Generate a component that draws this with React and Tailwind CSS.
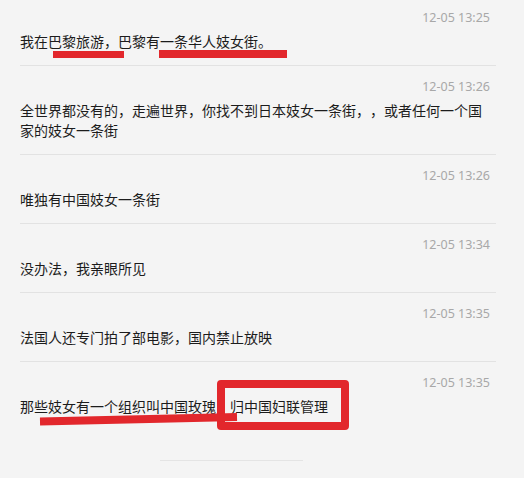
import React from "react";

const CJK = { fontFamily: '"Noto Sans CJK SC", "Noto Sans", sans-serif' };
const TS = { fontFamily: '"Noto Sans", "Liberation Sans", sans-serif' };

const rows = [
  { time: "12-05 13:25", text: "我在巴黎旅游，巴黎有一条华人妓女街。" },
  { time: "12-05 13:26", text: "全世界都没有的，走遍世界，你找不到日本妓女一条街，，或者任何一个国家的妓女一条街" },
  { time: "12-05 13:26", text: "唯独有中国妓女一条街" },
  { time: "12-05 13:34", text: "没办法，我亲眼所见" },
  { time: "12-05 13:35", text: "法国人还专门拍了部电影，国内禁止放映" },
  { time: "12-05 13:35", text: "那些妓女有一个组织叫中国玫瑰，归中国妇联管理" },
];

function Row({ time, text, first, last }) {
  return (
    <div className={`${first ? "pt-[10px]" : "pt-[13px]"} ${last ? "" : "pb-[14px] border-b border-[#e2e2e2]"} ml-[20px] mr-[28px]`}>
      <div className="flex justify-end pr-[6px] h-[16px] items-center">
        <span style={TS} className="text-[12.5px] leading-[16px] text-[#a8a8a8]">{time}</span>
      </div>
      <div style={CJK} className="mt-[5px] pr-[10px] text-[14px] leading-[20px] text-[#1c1c1c] [text-spacing-trim:space-all] break-all">{text}</div>
    </div>
  );
}

export default function App() {
  return (
    <div className="relative w-[524px] h-[478px] overflow-hidden bg-[#f4f4f4]">
      {rows.map((r, i) => (
        <Row key={i} {...r} first={i === 0} last={i === rows.length - 1} />
      ))}
      <div className="mt-[44px] ml-[160px] w-[143px] h-px bg-[#e4e4e4]" />

      {/* red annotations */}
      <div className="absolute left-[53px] top-[51px] w-[71px] h-[7px] bg-[#e2272c]" />
      <div className="absolute left-[159px] top-[50px] w-[128px] h-[8px] bg-[#e2272c]" />
      <div className="absolute left-[217px] top-[380px] w-[132px] h-[50px] rounded-[4px] border-[8px] border-[#e2272c]" />
      <svg className="absolute left-0 top-0" width="524" height="478">
        <line x1="40" y1="421.5" x2="237" y2="417" stroke="#e2272c" strokeWidth="8" />
      </svg>
    </div>
  );
}
